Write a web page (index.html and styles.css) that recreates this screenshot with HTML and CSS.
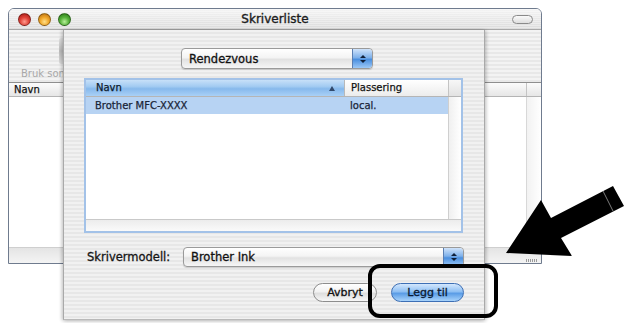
FILE: index.html
```html
<!DOCTYPE html>
<html lang="no">
<head>
<meta charset="utf-8">
<title>Skriverliste</title>
<link rel="stylesheet" href="styles.css">
</head>
<body>
<div class="desk">
  <div class="window">
    <div class="titlebar">
      <div class="lights">
        <span class="light red"></span>
        <span class="light yellow"></span>
        <span class="light green"></span>
      </div>
      <div class="title">Skriverliste</div>
      <span class="zoombtn"></span>
    </div>
    <div class="toolbar">
      <div class="tool">
        <span class="tool-icon"></span>
        <span class="tool-label">Bruk som</span>
      </div>
    </div>
    <div class="list-head">
      <span class="lh-name">Navn</span>
      <span class="lh-spacer"></span>
      <span class="lh-col"></span>
      <span class="lh-end"></span>
    </div>
    <div class="list-body">
      <span class="lb-spacer"></span>
      <span class="lb-col"></span>
      <span class="lb-end"></span>
    </div>
    <div class="list-foot"><span class="grip"></span></div>
  </div>

  <div class="sheet">
    <div class="popup-row">
      <div class="popup popup-top">
        <span class="popup-text">Rendezvous</span>
        <span class="stepper"><i class="up"></i><i class="down"></i></span>
      </div>
    </div>

    <div class="table">
      <div class="thead">
        <div class="th th-name"><span>Navn</span><i class="sort"></i></div>
        <div class="th th-loc">Plassering</div>
        <div class="th th-scroll"></div>
      </div>
      <div class="tbody">
        <div class="rows">
          <div class="row selected">
            <span class="cell c-name">Brother MFC-XXXX</span>
            <span class="cell c-loc">local.</span>
          </div>
        </div>
        <div class="vscroll"></div>
      </div>
      <div class="hscroll"></div>
    </div>

    <div class="model-row">
      <span class="model-label">Skrivermodell:</span>
      <div class="popup popup-model">
        <span class="popup-text">Brother Ink</span>
        <span class="stepper"><i class="up"></i><i class="down"></i></span>
      </div>
    </div>

    <div class="button-row">
      <span class="btn btn-cancel">Avbryt</span>
      <span class="btn btn-default">Legg til</span>
    </div>
  </div>

  <svg class="arrow" width="626" height="323" viewBox="0 0 626 323">
    <polygon points="506,253 541,200 551,218 613,186 624,206 561,238 572,256" fill="#000"/>
    <line x1="603" y1="191" x2="613" y2="211" stroke="#9a9a9a" stroke-width="0.8"/>
  </svg>

  <div class="highlight"></div>
</div>
</body>
</html>
```

FILE: styles.css
```css
* { box-sizing: border-box; }

html, body {
  margin: 0;
  padding: 0;
  background: #ffffff;
}

body {
  font-family: "DejaVu Sans", "Liberation Sans", sans-serif;
  color: #1a1a1a;
}

.desk {
  position: relative;
  width: 626px;
  height: 323px;
  overflow: hidden;
  background: #ffffff;
}

/* ---------- background window ---------- */
.window {
  position: absolute;
  left: 8px;
  top: 8px;
  width: 534px;
  height: 256px;
  border: 1px solid #6f7b8e;
  border-radius: 6px 6px 0 0;
  display: flex;
  flex-direction: column;
  background: #ffffff;
  overflow: hidden;
}

.titlebar {
  height: 21px;
  flex: none;
  display: flex;
  align-items: center;
  position: relative;
  background:
    repeating-linear-gradient(to bottom, rgba(255,255,255,0.35) 0 1px, rgba(0,0,0,0) 1px 2px),
    linear-gradient(to bottom, #f4f4f4, #dcdcdc);
  border-bottom: 1px solid #a8a8a8;
}

.lights {
  display: flex;
  gap: 7px;
  padding-left: 9px;
  margin-top: 1px;
}

.light {
  width: 13px;
  height: 13px;
  border-radius: 50%;
  border: 1px solid rgba(0,0,0,0.35);
}
.light.red    { background: radial-gradient(circle at 50% 70%, #ff9b8e 0, #e0443a 45%, #a3140f 100%); }
.light.yellow { background: radial-gradient(circle at 50% 70%, #ffe08a 0, #f0a72a 45%, #b2680a 100%); }
.light.green  { background: radial-gradient(circle at 50% 70%, #b8f09a 0, #58b33c 45%, #23720f 100%); }

.title {
  position: absolute;
  left: 0;
  right: 0;
  top: 3px;
  text-align: center;
  font-size: 12px;
  color: #1c1c1c;
  -webkit-text-stroke: 0.35px #1c1c1c;
}

.zoombtn {
  position: absolute;
  right: 8px;
  top: 6px;
  width: 21px;
  height: 9px;
  border-radius: 5px;
  border: 1px solid #8a8a8a;
  background: linear-gradient(to bottom, #fafafa, #dedede);
}

.toolbar {
  height: 53px;
  flex: none;
  background: repeating-linear-gradient(to bottom, #f3f3f3 0 2px, #e8e8e8 2px 4px);
  border-bottom: 1px solid #8e8e8e;
  padding: 8px 0 0 12px;
}

.tool {
  display: flex;
  flex-direction: column;
  align-items: flex-start;
}

.tool-icon {
  width: 5px;
  height: 26px;
  margin-left: 38px;
  background: linear-gradient(to bottom, #e2e2e2, #bdbdbd 50%, #dcdcdc);
  border-radius: 2px 0 0 2px;
}

.tool-label {
  margin-top: 4px;
  font-size: 10px;
  color: #a8a8a8;
}

.list-head {
  height: 14px;
  flex: none;
  display: flex;
  background: linear-gradient(to bottom, #fbfbfb, #e6e6e6);
  border-bottom: 1px solid #b4b4b4;
  font-size: 10px;
}

.lh-name {
  padding-left: 5px;
  line-height: 13px;
  color: #111;
  -webkit-text-stroke: 0.25px #111;
}
.lh-spacer { flex: 1; }
.lh-col { width: 15px; border-left: 1px solid #c4c4c4; }
.lh-end { width: 0; }

.list-body {
  flex: 1;
  display: flex;
  background: #ffffff;
}
.lb-spacer { flex: 1; }
.lb-col { width: 15px; border-left: 1px solid #d8d8d8; background: linear-gradient(to right, #f2f2f2, #ffffff); }
.lb-end { width: 0; }

.list-foot {
  height: 16px;
  flex: none;
  position: relative;
  background: linear-gradient(to bottom, #e4e4e4, #f4f4f4);
  border-top: 1px solid #cfcfcf;
}
.grip {
  position: absolute;
  right: 4px;
  bottom: 1px;
  width: 11px;
  height: 3px;
  background: repeating-linear-gradient(to right, #9a9a9a 0 1px, transparent 1px 2px);
}

/* ---------- sheet ---------- */
.sheet {
  position: absolute;
  left: 63px;
  top: 30px;
  width: 422px;
  height: 290px;
  background: repeating-linear-gradient(to bottom, #f1f1f1 0 2px, #e7e7e7 2px 4px);
  border-left: 1px solid #a9a9a9;
  border-right: 1px solid #a9a9a9;
  border-bottom: 1px solid #b9b9b9;
  box-shadow: -2px 0 3px rgba(0,0,0,0.12), 2px 0 3px rgba(0,0,0,0.12), 0 2px 4px rgba(0,0,0,0.15);
  display: flex;
  flex-direction: column;
  padding: 18px 0 0 20px;
}

.popup-row {
  display: flex;
  padding-left: 97px;
}

.popup {
  display: flex;
  align-items: center;
  height: 21px;
  border: 1px solid #9a9a9a;
  border-radius: 4px;
  background: linear-gradient(to bottom, #ffffff 0, #f4f4f4 45%, #e2e2e2 55%, #f6f6f6 100%);
  box-shadow: 0 1px 1px rgba(0,0,0,0.15);
  overflow: hidden;
}

.popup-top { width: 192px; }
.popup-model { width: 281px; height: 20px; }

.popup-text {
  flex: 1;
  padding-left: 7px;
  font-size: 11.5px;
  color: #111;
  white-space: nowrap;
  -webkit-text-stroke: 0.3px #111;
}

.stepper {
  width: 20px;
  align-self: stretch;
  display: flex;
  flex-direction: column;
  align-items: center;
  justify-content: center;
  gap: 2px;
  background: linear-gradient(to bottom, #cfe3fb 0, #7fb1ea 45%, #4a8fdf 55%, #9cc8f7 100%);
  border-left: 1px solid #5b7fb2;
  border-radius: 0 3px 3px 0;
}
.stepper i {
  width: 0;
  height: 0;
  border-left: 3px solid transparent;
  border-right: 3px solid transparent;
}
.stepper .up { border-bottom: 3px solid #10203a; }
.stepper .down { border-top: 3px solid #10203a; }

/* ---------- table ---------- */
.table {
  margin-top: 9px;
  width: 379px;
  height: 155px;
  border: 2px solid #a3c2e8;
  background: #ffffff;
  display: flex;
  flex-direction: column;
}

.thead {
  height: 17px;
  flex: none;
  display: flex;
  font-size: 10px;
  border-bottom: 1px solid #b5b5b5;
}

.th {
  display: flex;
  align-items: center;
  line-height: 16px;
  -webkit-text-stroke: 0.25px currentColor;
}

.th-name {
  width: 258px;
  padding-left: 10px;
  justify-content: space-between;
  padding-right: 9px;
  background: linear-gradient(to bottom, #c7e0f8 0, #a3cbf2 40%, #87b9ec 55%, #a9d0f6 100%);
  color: #0d1a2c;
}
.sort {
  width: 0;
  height: 0;
  border-left: 3px solid transparent;
  border-right: 3px solid transparent;
  border-bottom: 5px solid #324a6c;
}

.th-loc {
  width: 104px;
  padding-left: 6px;
  background: linear-gradient(to bottom, #ffffff, #ececec);
  border-left: 1px solid #b9b9b9;
  color: #111;
}

.th-scroll {
  flex: 1;
  background: linear-gradient(to bottom, #f7f7f7, #e2e2e2);
  border-left: 1px solid #c4c4c4;
}

.tbody {
  flex: 1;
  display: flex;
}

.rows {
  width: 362px;
  display: flex;
  flex-direction: column;
}

.row {
  height: 17px;
  display: flex;
  align-items: center;
  font-size: 10px;
}
.row.selected { background: #b7d3f3; }

.cell { white-space: nowrap; -webkit-text-stroke: 0.25px currentColor; }
.c-name { width: 258px; padding-left: 9px; color: #1a2538; }
.c-loc { padding-left: 6px; color: #1a2538; }

.vscroll {
  flex: 1;
  border-left: 1px solid #cfcfcf;
  background: linear-gradient(to right, #f0f0f0, #ffffff);
}

.hscroll {
  height: 12px;
  flex: none;
  border-top: 1px solid #c9c9c9;
  background: linear-gradient(to bottom, #ececec, #fafafa);
}

/* ---------- model row ---------- */
.model-row {
  margin-top: 14px;
  display: flex;
  align-items: center;
  padding-left: 3px;
}

.model-label {
  width: 96px;
  font-size: 11.5px;
  color: #151515;
  -webkit-text-stroke: 0.3px #151515;
}

/* ---------- buttons ---------- */
.button-row {
  margin-top: 16px;
  display: flex;
  gap: 14px;
  padding-left: 229px;
}

.btn {
  height: 19px;
  border-radius: 10px;
  display: flex;
  align-items: center;
  justify-content: center;
  font-size: 11px;
  color: #111;
  -webkit-text-stroke: 0.3px currentColor;
}

.btn-cancel {
  width: 64px;
  border: 1px solid #8d8d8d;
  background: linear-gradient(to bottom, #ffffff 0, #f2f2f2 45%, #dedede 55%, #f7f7f7 100%);
}

.btn-default {
  width: 73px;
  border: 1px solid #3d6fb5;
  background: linear-gradient(to bottom, #d3e7fd 0, #8ebff3 45%, #5a9ce6 55%, #a8d3fb 100%);
  color: #0b1a33;
}

/* ---------- annotations ---------- */
.arrow {
  position: absolute;
  left: 0;
  top: 0;
}

.highlight {
  position: absolute;
  left: 368px;
  top: 264px;
  width: 130px;
  height: 54px;
  border: 4px solid #000;
  border-radius: 12px;
}
```
